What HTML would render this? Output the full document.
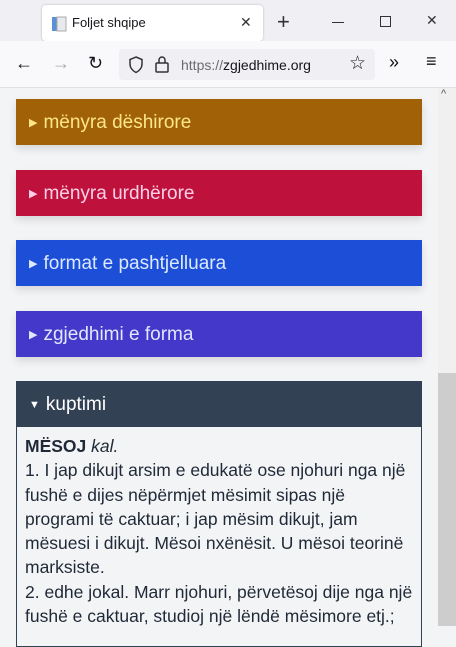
<!DOCTYPE html>
<html><head><meta charset="utf-8"><style>
*{box-sizing:border-box;margin:0;padding:0}
body{width:456px;height:626px;overflow:hidden;font-family:"Liberation Sans",sans-serif;background:#f3f4f6;position:relative}
.tabs{position:absolute;left:0;top:0;width:456px;height:41px;background:#f0f0f4}
.tab{position:absolute;left:42px;top:5px;width:221px;height:36px;background:#fff;border-radius:4px;box-shadow:0 0 2px rgba(0,0,0,.25)}
.tb{position:absolute;left:0;top:41px;width:456px;height:47px;background:#f9f9fb;border-bottom:1px solid #e0e0e6}
.url{position:absolute;left:119px;top:8px;width:256px;height:31px;background:#f0f0f4;border-radius:4px}
.ic{position:absolute;color:#15141a;font-size:18px}
.page{position:absolute;left:0;top:88px;width:438px;height:538px}
.sb{position:absolute;left:438px;top:88px;width:18px;height:538px;background:#f0f0f0}
.th{position:absolute;left:438px;top:373px;width:18px;height:253px;background:#cdcdcd}
.btn{position:absolute;left:16px;width:406px;height:46px;font-size:19px;line-height:48px;padding-left:13px;box-shadow:0 4px 8px rgba(0,0,0,.12)}
.btn span{font-size:11px;margin-right:6px;position:relative;top:-2px}
.box{position:absolute;left:16px;top:427px;width:406px;height:220px;border:1px solid #334155;border-top:none;padding:7px 8px;font-size:17.5px;line-height:24.3px;color:#1f2937;background:#f3f4f6}
</style></head><body>
<div class="tabs">
<div class="tab">
<svg style="position:absolute;left:9px;top:11px" width="16" height="16"><rect x="1" y="1" width="5" height="14" fill="#5b8fd6"/><rect x="6" y="1" width="9" height="14" fill="#e8e8ee" stroke="#aaa"/></svg>
<div style="position:absolute;left:30px;top:10px;font-size:13px;color:#15141a">Foljet shqipe</div>
<div style="position:absolute;left:198px;top:9px;font-size:14px;color:#333">✕</div>
</div>
<div class="ic" style="left:277px;top:9px;font-size:22px;color:#333">+</div>
<div style="position:absolute;left:332px;top:22px;width:12px;height:1px;background:#333"></div>
<div style="position:absolute;left:380px;top:16px;width:11px;height:11px;border:1px solid #333"></div>
<div class="ic" style="left:426px;top:12px;font-size:14px;color:#333">✕</div>
</div>
<div class="tb">
<div class="ic" style="left:15px;top:12px">←</div>
<div class="ic" style="left:52px;top:12px;color:#aaa">→</div>
<div class="ic" style="left:88px;top:12px">↻</div>
<div class="url">
<svg style="position:absolute;left:9px;top:7px" width="16" height="18"><path d="M8 1 L14 3.5 V8 C14 12 11 15 8 16.5 C5 15 2 12 2 8 V3.5Z" fill="none" stroke="#333" stroke-width="1.5"/></svg>
<svg style="position:absolute;left:35px;top:6px" width="16" height="18"><rect x="2" y="8" width="12" height="9" rx="1" fill="none" stroke="#333" stroke-width="1.5"/><path d="M5 8V5a3 3 0 0 1 6 0v3" fill="none" stroke="#333" stroke-width="1.5"/></svg>
<div style="position:absolute;left:62px;top:8px;font-size:14px;color:#15141a"><span style="color:#6b6b70">https://</span>zgjedhime.org</div>
<div class="ic" style="left:230px;top:3px;font-size:19px">☆</div>
</div>
<div class="ic" style="left:389px;top:11px">»</div>
<div class="ic" style="left:426px;top:10px">≡</div>
</div>
<div class="page">
<div class="btn" style="top:11px;background:#a16207;color:#fde68a"><span>▶</span>mënyra dëshirore</div>
<div class="btn" style="top:82px;background:#be123c;color:#fbcfe8"><span>▶</span>mënyra urdhërore</div>
<div class="btn" style="top:152px;background:#1d4ed8;color:#dbeafe"><span>▶</span>format e pashtjelluara</div>
<div class="btn" style="top:223px;background:#4338ca;color:#e0e7ff"><span>▶</span>zgjedhimi e forma</div>
<div class="btn" style="top:293px;background:#334155;color:#fff;box-shadow:none"><span>▼</span>kuptimi</div>
</div>
<div class="box"><b>MËSOJ</b> <i>kal.</i><br>1. I jap dikujt arsim e edukatë ose njohuri nga një fushë e dijes nëpërmjet mësimit sipas një programi të caktuar; i jap mësim dikujt, jam mësuesi i dikujt. Mësoi nxënësit. U mësoi teorinë marksiste.<br>2. edhe jokal. Marr njohuri, përvetësoj dije nga një fushë e caktuar, studioj një lëndë mësimore etj.;</div>
<div class="sb"></div><div class="th"></div>
<div style="position:absolute;left:441px;top:88px;font-size:11px;color:#555">^</div>
</body></html>
